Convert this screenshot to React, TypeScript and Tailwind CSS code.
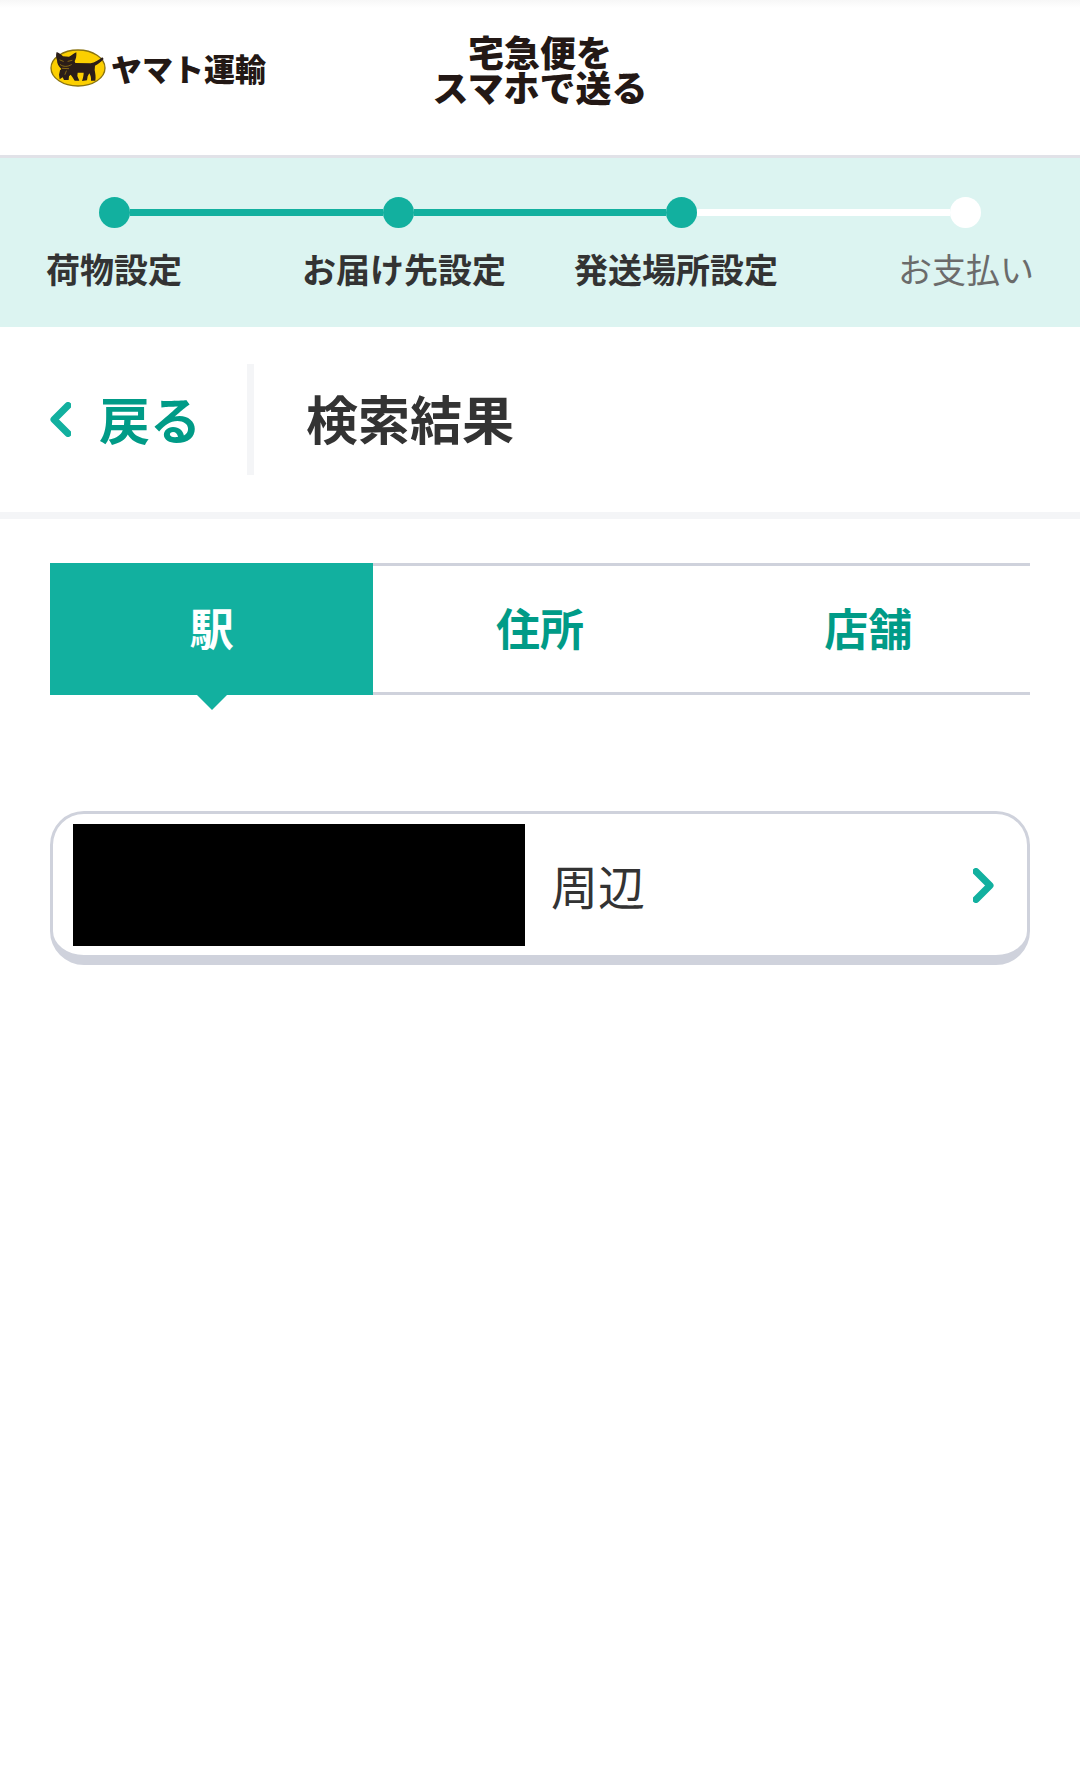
import React, { useState } from 'react';
import { clsx } from 'clsx';

interface ChevronProps {
  direction: 'left' | 'right';
}

const Chevron: React.FC<ChevronProps> = ({ direction }) => (
  <svg
    viewBox="0 0 21 35"
    className={clsx('h-[35px] w-[21px] shrink-0', direction === 'left' && 'rotate-180')}
    fill="none"
    stroke="#12b09f"
    strokeWidth="7"
    strokeLinecap="round"
    strokeLinejoin="round"
    aria-hidden="true"
  >
    <path d="M3 3.5 L17 17.5 L3 31.5" />
  </svg>
);

const CatMark: React.FC = () => (
  <svg viewBox="0 0 168 114" className="h-[38px] w-14 shrink-0" aria-hidden="true">
    <ellipse cx="84" cy="57" rx="81" ry="54" fill="#fccf00" stroke="#8b7410" strokeWidth="4" />
    <g fill="#2b1d18">
      <path d="M20 9 C26 11 34 17 39 22 L57 23 C64 20 71 14 79 10 C80 20 78 30 74 37 L76 42 L122 43 C134 41 146 34 157 25 L161 30 C152 40 144 46 135 50 L134 63 C136 74 138 84 136 95 L123 95 C124 87 122 80 118 73 L113 82 L111 94 L96 96 C99 87 101 79 101 71 L83 71 L82 81 L88 95 L74 95 C70 88 66 82 62 77 L57 82 L56 93 L42 93 L38 85 L29 91 L27 77 L30 64 L34 60 C26 53 21 44 21 34 C18 25 17 17 20 9 Z" />
    </g>
    <g fill="none" stroke="#b38d10" strokeWidth="2" strokeLinecap="round">
      <path d="M30 33 L40 37 M54 37 L66 34 M31 47 C40 54 53 54 64 47 M37 58 L56 59 M49 66 L45 76" />
    </g>
  </svg>
);

const steps = [
  { label: '荷物設定', done: true },
  { label: 'お届け先設定', done: true },
  { label: '発送場所設定', done: true },
  { label: 'お支払い', done: false },
];

const StepBar: React.FC = () => (
  <nav aria-label="手続きの進行状況" className="bg-[#dcf4f1] pt-[39px] pb-[34px]">
    <div className="flex items-center px-[99px]" aria-hidden="true">
      {steps.map((step, i) => (
        <React.Fragment key={step.label}>
          {i > 0 && <span className={clsx('h-[7px] flex-1', step.done ? 'bg-[#12b09f]' : 'bg-white')} />}
          <span className={clsx('size-[31px] rounded-full', step.done ? 'bg-[#12b09f]' : 'bg-white')} />
        </React.Fragment>
      ))}
    </div>
    {/* 左右2ステップずつに分けて両端揃えにする */}
    <div className="mt-4 grid grid-cols-2 gap-[68px] px-[46px] text-[34px] leading-[49px]">
      {[steps.slice(0, 2), steps.slice(2)].map((pair) => (
        <div key={pair[0].label} className="flex justify-between whitespace-nowrap">
          {pair.map((step) => (
            <span key={step.label} className={step.done ? 'font-bold text-[#333]' : 'text-[#6b6b6b]'}>
              {step.label}
            </span>
          ))}
        </div>
      ))}
    </div>
  </nav>
);

const tabs = [
  { label: '駅', width: 'w-[33%]' },
  { label: '住所', width: 'w-[34%]' },
  { label: '店舗', width: 'w-[33%]' },
];

export default function App() {
  const [active, setActive] = useState('駅');

  return (
    <div
      lang="ja"
      className="min-h-screen bg-white font-['Noto_Sans_CJK_JP',sans-serif] text-[#333]"
    >
      <header className="grid grid-cols-3 items-start border-b-3 border-[#e1e2e8] bg-linear-to-b from-[#f7f7f7] to-white to-[8px] px-[50px] pt-[34px] pb-[51px] text-[#231815]">
        <a href="#" className="mt-[15px] flex items-center gap-[5px]">
          <CatMark />
          <span className="text-[31px] leading-[38px] font-black whitespace-nowrap">ヤマト運輸</span>
        </a>
        <p className="text-center text-[36px] leading-[35px] font-black whitespace-nowrap">
          宅急便を
          <br />
          スマホで送る
        </p>
      </header>

      <StepBar />

      <div className="flex items-center border-b-7 border-[#f4f5f7] px-[50px] py-[37px]">
        <a href="#" className="flex items-center gap-7 text-[#009b87]">
          <Chevron direction="left" />
          <span className="pb-1 text-[51px] leading-[74px] font-bold">戻る</span>
        </a>
        <div className="ml-[46px] flex h-[111px] items-center border-l-7 border-[#f4f5f7] pl-[52px]">
          <h1 className="pb-1 text-[52px] leading-[74px] font-bold">検索結果</h1>
        </div>
      </div>

      <main className="px-[50px] pt-11">
        <div role="tablist" className="flex">
          {tabs.map((tab) => {
            const selected = tab.label === active;
            return (
              <button
                key={tab.label}
                type="button"
                role="tab"
                aria-selected={selected}
                onClick={() => setActive(tab.label)}
                className={clsx(
                  'relative h-[132px] border-y-3 pb-1 text-[44px] leading-[64px] font-bold',
                  tab.width,
                  selected ? 'border-[#12b09f] bg-[#12b09f] text-white' : 'border-[#cfd2dc] text-[#009b87]'
                )}
              >
                {tab.label}
                {selected && (
                  <span className="absolute top-full left-1/2 mt-[3px] -ml-[15px] border-x-15 border-t-15 border-x-transparent border-t-[#12b09f]" />
                )}
              </button>
            );
          })}
        </div>

        <a
          href="#"
          className="mt-[116px] flex items-center rounded-[34px] border-3 border-b-10 border-[#cfd2dc] pt-[10px] pr-[33px] pb-[9px] pl-5"
        >
          <span className="h-[122px] w-[452px] bg-black" />
          <span className="ml-[26px] flex-1 text-[47px] leading-[68px]">周辺</span>
          <Chevron direction="right" />
        </a>
      </main>
    </div>
  );
}
